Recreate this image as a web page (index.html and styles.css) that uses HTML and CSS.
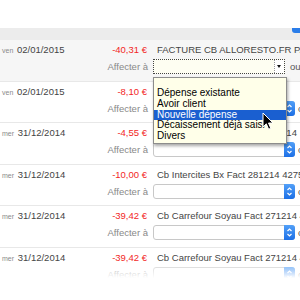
FILE: index.html
```html
<!DOCTYPE html>
<html lang="fr">
<head>
  <meta charset="UTF-8" />
  <meta name="viewport" content="width=device-width, initial-scale=1.0" />
  <title>Opérations</title>
  <link rel="stylesheet" href="styles.css">
</head>
<body>
  <div class="page">
    <div class="blank"></div>
    <div class="prev"><span class="prev-btn"></span></div>

    <div class="op op-active">
      <div class="line1">
        <div class="left"><span class="date"><small>ven</small> 02/01/2015</span><span class="amount">-40,31 €</span></div>
        <span class="label">FACTURE CB ALLORESTO.FR PARIS</span>
      </div>
      <div class="line2">
        <span class="aff">Affecter à</span>
        <div class="select select-focus"><span class="arrow"></span></div>
        <span class="ou">ou</span>
      </div>

      <ul class="menu">
        <li class="empty"></li>
        <li>Dépense existante</li>
        <li>Avoir client</li>
        <li class="hover">Nouvelle dépense</li>
        <li>Décaissement déjà saisi</li>
        <li>Divers</li>
      </ul>
      <svg class="cursor" width="12" height="19" viewBox="0 0 12 19">
        <path d="M1 1 L1 15 L4.3 11.8 L6.6 17.2 L8.8 16.3 L6.5 11 L11 11 Z" fill="#000" stroke="#fff" stroke-width="1" stroke-linejoin="round"/>
      </svg>
    </div>

    <div class="op">
      <div class="line1">
        <div class="left"><span class="date"><small>ven</small> 02/01/2015</span><span class="amount">-8,10 €</span></div>
        <span class="label">Cb Intercites Bx Fact 281214</span>
      </div>
      <div class="line2">
        <span class="aff">Affecter à</span>
        <div class="select"><span class="btn"><svg width="11" height="15" viewBox="0 0 11 15"><path d="M3.5 6 L5.5 4 L7.5 6 M3.5 9 L5.5 11 L7.5 9" fill="none" stroke="#fff" stroke-width="1.2"/></svg></span></div>
        <span class="ou">ou</span>
      </div>
    </div>

    <div class="op">
      <div class="line1">
        <div class="left"><span class="date"><small>mer</small> 31/12/2014</span><span class="amount">-4,55 €</span></div>
        <span class="label">Cb Carrefour Soyau Fact 281214</span>
      </div>
      <div class="line2">
        <span class="aff">Affecter à</span>
        <div class="select"><span class="btn"><svg width="11" height="15" viewBox="0 0 11 15"><path d="M3.5 6 L5.5 4 L7.5 6 M3.5 9 L5.5 11 L7.5 9" fill="none" stroke="#fff" stroke-width="1.2"/></svg></span></div>
        <span class="ou">ou</span>
      </div>
    </div>

    <div class="op">
      <div class="line1">
        <div class="left"><span class="date"><small>mer</small> 31/12/2014</span><span class="amount">-10,00 €</span></div>
        <span class="label">Cb Intercites Bx Fact 281214 4275</span>
      </div>
      <div class="line2">
        <span class="aff">Affecter à</span>
        <div class="select"><span class="btn"><svg width="11" height="15" viewBox="0 0 11 15"><path d="M3.5 6 L5.5 4 L7.5 6 M3.5 9 L5.5 11 L7.5 9" fill="none" stroke="#fff" stroke-width="1.2"/></svg></span></div>
        <span class="ou">ou</span>
      </div>
    </div>

    <div class="op">
      <div class="line1">
        <div class="left"><span class="date"><small>mer</small> 31/12/2014</span><span class="amount">-39,42 €</span></div>
        <span class="label">Cb Carrefour Soyau Fact 271214 4275</span>
      </div>
      <div class="line2">
        <span class="aff">Affecter à</span>
        <div class="select"><span class="btn"><svg width="11" height="15" viewBox="0 0 11 15"><path d="M3.5 6 L5.5 4 L7.5 6 M3.5 9 L5.5 11 L7.5 9" fill="none" stroke="#fff" stroke-width="1.2"/></svg></span></div>
        <span class="ou">ou</span>
      </div>
    </div>

    <div class="op">
      <div class="line1">
        <div class="left"><span class="date"><small>mer</small> 31/12/2014</span><span class="amount">-39,42 €</span></div>
        <span class="label">Cb Carrefour Soyau Fact 271214 4275</span>
      </div>
      <div class="line2">
        <span class="aff">Affecter à</span>
        <div class="select"><span class="btn"><svg width="11" height="15" viewBox="0 0 11 15"><path d="M3.5 6 L5.5 4 L7.5 6 M3.5 9 L5.5 11 L7.5 9" fill="none" stroke="#fff" stroke-width="1.2"/></svg></span></div>
        <span class="ou">ou</span>
      </div>
    </div>

    <div class="fade"></div>
  </div>
</body>
</html>
```

FILE: styles.css
```css
body {
  margin: 0;
  background: #fff;
  font-family: 'Liberation Sans', Arial, sans-serif;
  color: #444;
}
.page {
  position: relative;
  width: 300px;
  height: 300px;
  overflow: hidden;
  white-space: nowrap;
}
.blank {
  height: 28px;
}
.prev {
  height: 12px;
  background: #ececec;
  display: flex;
}
.prev-btn {
  margin-left: 292px;
  width: 12px;
  height: 5px;
  background: #2a7de9;
  border-radius: 0 0 0 3px;
}
.op {
  position: relative;
  width: 340px;
  padding: 4px 0 6.5px;
  border-bottom: 1px solid #e8e8e8;
  font-size: 9.5px;
}
.op-active {
  background: #f6f6f6;
}
.line1 {
  display: flex;
  height: 11px;
  line-height: 11px;
}
.left {
  width: 150px;
  box-sizing: border-box;
  padding: 0 3px 0 2px;
  display: flex;
  justify-content: space-between;
}
.date small {
  font-size: 7px;
  color: #8a8a8a;
  margin-right: 1px;
}
.amount {
  color: #f2261e;
}
.label {
  margin-left: 7px;
  color: #444;
}
.line2 {
  display: flex;
  align-items: center;
  height: 15px;
  margin-top: 4px;
}
.aff {
  width: 150px;
  box-sizing: border-box;
  padding-right: 2px;
  text-align: right;
  color: #888;
}
.select {
  margin-left: 3px;
  width: 142px;
  height: 15px;
  box-sizing: border-box;
  border: 1px solid #c8c8c8;
  border-radius: 3px;
  background: #fff;
  display: flex;
  justify-content: flex-end;
}
.btn {
  width: 11px;
  margin: -1px -1px -1px 0;
  border-radius: 0 3px 3px 0;
  background: linear-gradient(#52a0f8, #1c6fe6);
}
.btn svg {
  display: block;
}
.select-focus {
  width: 132px;
  border: 1px dotted #444;
  border-radius: 0;
  background: #fefef2;
}
.arrow {
  width: 9px;
  border-left: 1px dotted #999;
  background: #fff;
  position: relative;
}
.arrow::after {
  content: "";
  position: absolute;
  left: 2px;
  top: 5px;
  border-left: 2.5px solid transparent;
  border-right: 2.5px solid transparent;
  border-top: 3px solid #111;
}
.ou {
  margin-left: 3px;
  color: #555;
}
.select-focus + .ou {
  margin-left: 5px;
}
.menu {
  position: absolute;
  left: 153px;
  top: 37px;
  width: 134px;
  box-sizing: border-box;
  margin: 0;
  padding: 1px 0 1px;
  list-style: none;
  background: #ffffe9;
  border: 1px solid #8c8c8c;
  box-shadow: 1px 2px 3px rgba(0, 0, 0, 0.35);
  font-size: 10px;
  color: #000;
  z-index: 2;
}
.menu li {
  height: 10.75px;
  line-height: 10.75px;
  padding-left: 3px;
}
.menu li.empty {
  height: 9px;
}
.menu li.hover {
  background: #1a5fd0;
  color: #fff;
}
.cursor {
  position: absolute;
  left: 262px;
  top: 72px;
  z-index: 3;
}
.fade {
  position: absolute;
  left: 0;
  top: 260px;
  width: 100%;
  height: 40px;
  background: linear-gradient(rgba(255, 255, 255, 0), #fff 45%);
  z-index: 4;
}
```
